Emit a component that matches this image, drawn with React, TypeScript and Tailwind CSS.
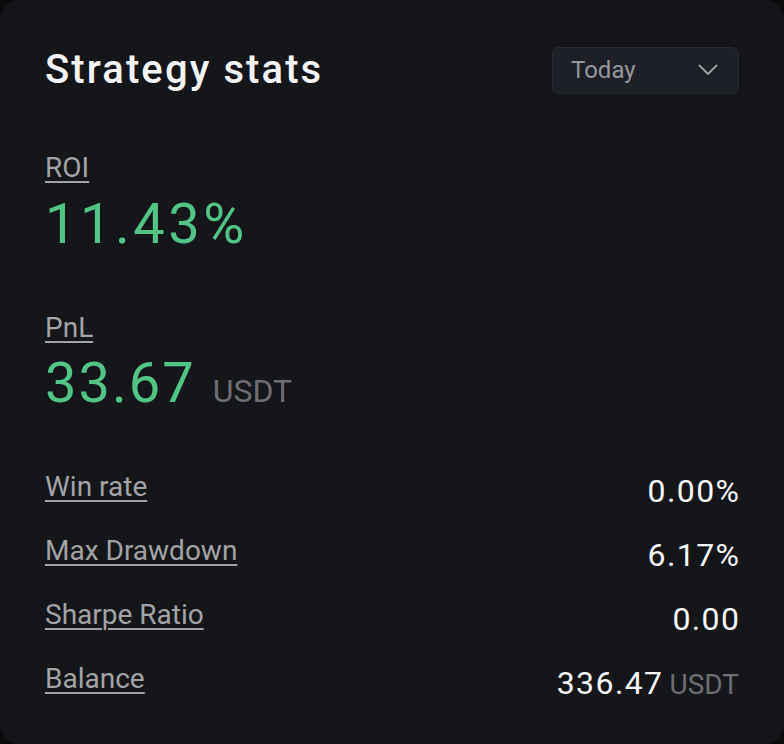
import React from 'react'

const rows = [
  { label: 'Win rate', value: '0.00%' },
  { label: 'Max Drawdown', value: '6.17%' },
  { label: 'Sharpe Ratio', value: '0.00' },
  { label: 'Balance', value: '336.47', unit: 'USDT' },
]

function Chevron() {
  return (
    <svg width="20" height="12" viewBox="0 0 20 12" fill="none">
      <polyline points="1.5,1.5 10,10 18.5,1.5" stroke="#9a9ca0" strokeWidth="2" strokeLinecap="round" strokeLinejoin="round" />
    </svg>
  )
}

export default function App() {
  return (
    <div className="w-[784px] h-[744px] bg-[#0c0d0f] font-['Roboto',sans-serif]">
      <div className="w-full h-full rounded-[20px] bg-[#15161a] px-[45px] pt-[46px]">
        {/* Header */}
        <div className="flex items-center justify-between h-[48px]">
          <h1 className="text-[40px] leading-[48px] text-[#f4f5f6] font-medium tracking-[2.1px]">Strategy stats</h1>
          <button className="flex items-center justify-between w-[187px] h-[47px] pl-[18px] pr-[20px] rounded-[7px] bg-[#1d2027] border border-[#272a31]">
            <span className="text-[24px] leading-[30px] text-[#95979b]">Today</span>
            <Chevron />
          </button>
        </div>

        {/* ROI */}
        <div className="mt-[58px]">
          <div className="text-[28px] leading-[32px] text-[#a2a3a6] underline decoration-2 underline-offset-[4px]">
            <span>ROI</span>
          </div>
          <div className="mt-[8px] text-[56px] leading-[64px] text-[#52c486] tracking-[3.5px]">11.43%</div>
        </div>

        {/* PnL */}
        <div className="mt-[56px]">
          <div className="text-[28px] leading-[32px] text-[#a2a3a6] underline decoration-2 underline-offset-[4px]">
            <span>PnL</span>
          </div>
          <div className="mt-[7px] flex items-baseline gap-[17px]">
            <span className="text-[56px] leading-[64px] text-[#52c486] tracking-[2px]">33.67</span>
            <span className="text-[32px] leading-[40px] text-[#6b6d72]">USDT</span>
          </div>
        </div>

        {/* Stats rows */}
        <div className="mt-[56px] flex flex-col gap-[24px]">
          {rows.map((r) => (
            <div key={r.label} className="flex items-start justify-between">
              <span className="text-[28px] leading-[32px] text-[#a2a3a6] underline decoration-2 underline-offset-[4px]">
                {r.label}
              </span>
              <span className="flex items-baseline gap-[6px] leading-[40px]">
                <span className={`text-[32px] text-[#f7f8f9] tracking-[1.4px] ${r.unit ? '' : '-mr-[1.4px]'}`}>{r.value}</span>
                {r.unit && <span className="text-[28px] text-[#6b6d72]">{r.unit}</span>}
              </span>
            </div>
          ))}
        </div>
      </div>
    </div>
  )
}
